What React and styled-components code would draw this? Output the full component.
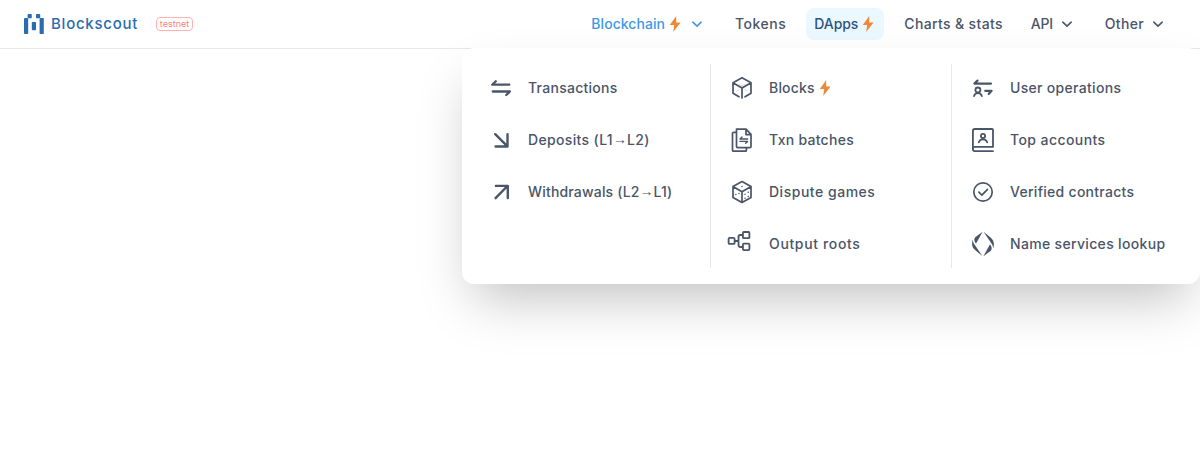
import React from "react";
import styled, { createGlobalStyle } from "styled-components";

const GlobalStyle = createGlobalStyle`
  * { box-sizing: border-box; }
  html, body { margin: 0; background: #fff; }
  body {
    height: 450px;
    overflow: hidden;
    font-family: Inter, "Liberation Sans", sans-serif;
    font-size: 14px;
    font-weight: 500;
    line-height: 20px;
    letter-spacing: 0.35px;
    color: #4a5568;
  }
`;

const Header = styled.header`
  position: relative;
  display: flex;
  align-items: center;
  justify-content: space-between;
  height: 49px;
  padding: 0 24px;
  border-bottom: 1px solid #e8e8e8;
`;

const Brand = styled.div`
  display: flex;
  align-items: center;
`;

const LogoMark = styled.svg`
  display: block;
  width: 20px;
  height: 20px;
`;

const Wordmark = styled.span`
  width: 105px;
  padding-left: 7px;
  margin-right: 7px;
  font-size: 15px;
  font-weight: 500;
  letter-spacing: 0.75px;
  white-space: nowrap;
  color: #2b6cb0;
`;

const NetworkTag = styled.span`
  display: flex;
  align-items: center;
  justify-content: center;
  width: 37px;
  height: 14px;
  border: 1px solid #feb2b2;
  border-radius: 4px;
  font-size: 9px;
  font-weight: 400;
  line-height: 12px;
  letter-spacing: 0;
  color: #fc8181;
`;

const Nav = styled.nav`
  display: flex;
  gap: 12px;
`;

const tones = {
  plain: { color: "#4a5568", background: "transparent" },
  open: { color: "#4299e1", background: "transparent" },
  current: { color: "#2c5282", background: "#ebf8ff" },
};

const NavItem = styled.a`
  display: flex;
  align-items: center;
  height: 32px;
  padding: 0 8px;
  border-radius: 8px;
  white-space: nowrap;
  color: ${(p) => tones[p.$tone || "plain"].color};
  background: ${(p) => tones[p.$tone || "plain"].background};
`;

const Label = styled.span`
  letter-spacing: ${(p) => p.$track ?? 0.35}px;
`;

const Arrow = styled.span`
  font-family: "Liberation Sans", sans-serif;
  font-weight: 400;
  line-height: 1;
  letter-spacing: 0;
  vertical-align: 1px;
`;

const BoltIcon = styled.svg`
  display: block;
  width: 14px;
  height: 16px;
  margin-left: 4px;
  flex: none;
  color: #ed8936;
`;

const ChevronIcon = styled.svg`
  display: block;
  width: 20px;
  height: 20px;
  margin-left: 4px;
  fill: none;
  stroke: currentColor;
  stroke-width: 1.6;
  stroke-linecap: round;
  stroke-linejoin: round;
`;

const Menu = styled.div`
  position: absolute;
  top: 48px;
  right: 0;
  display: flex;
  padding: 16px;
  border-radius: 12px;
  background: #fff;
  box-shadow: 0 25px 50px -12px rgba(0, 0, 0, 0.25);
`;

const Column = styled.div`
  display: flex;
  flex-direction: column;
  gap: 4px;
  & + & {
    border-left: 1px solid #e8e8e8;
    padding-left: 8px;
  }
  &:not(:last-child) {
    padding-right: 8px;
  }
`;

const MenuItem = styled.a`
  display: flex;
  align-items: center;
  width: 224px;
  height: 48px;
  padding: 0 8px;
  white-space: nowrap;
`;

const MenuIcon = styled.svg`
  display: block;
  flex: none;
  width: 30px;
  height: 30px;
  margin-right: 12px;
  fill: none;
  stroke: currentColor;
  stroke-width: ${(p) => p.$weight || 1.7};
  stroke-linecap: round;
  stroke-linejoin: round;
`;

const Bolt = () => (
  <BoltIcon viewBox="0 0 14 16">
    <path d="M7.2 0 .8 9h4.4L4.2 16 11.6 6.6H7.2Z" fill="currentColor" />
  </BoltIcon>
);

const Chevron = () => (
  <ChevronIcon viewBox="0 0 20 20">
    <path d="M5.8 8.2 10 12.2l4.2-4" />
  </ChevronIcon>
);

const icons = {
  transactions: (
    <MenuIcon viewBox="0 0 30 30" $weight={2.3}>
      <path d="M23.3 11.7H6.2L9.8 8.2M6.8 18.5h17.1l-3.6 3.5" />
    </MenuIcon>
  ),
  deposits: (
    <MenuIcon viewBox="0 0 30 30" $weight={2.4}>
      <path d="m9.2 9.2 12 12M21.5 9.2v12.3H9.6" />
    </MenuIcon>
  ),
  withdrawals: (
    <MenuIcon viewBox="0 0 30 30" $weight={2.4}>
      <path d="M9.6 21.2 21.4 9M9.9 8.9h11.9v12.1" />
    </MenuIcon>
  ),
  blocks: (
    <MenuIcon viewBox="0 0 30 30">
      <path d="M6 20.2V9.7l9-5 9 5v10.5l-6 3.6M6 20.2l6 3.6M6.3 9.9 15 15l8.7-5.1M15 15v10" />
      <path d="m15 13 3-1.7M9.5 18.2l2.5-1.5M18 16.7l2.5 1.5M12 11.3l3 1.7" strokeWidth=".5" opacity=".4" />
    </MenuIcon>
  ),
  batches: (
    <MenuIcon viewBox="0 0 30 30">
      <path d="M9.8 4.2H19l5 5.2v12.2q0 1-1 1H10.5q-1 0-1-1V4.2ZM19 4.4v5.2h5M9.2 7.3H6.6q-1.1 0-1.1 1v16.9q0 1 1 1h11.9q1 0 1-1v-2.4" />
      <path d="M20.6 14h-7.6l2-1.9M13 16.4h7.6l-2 1.9" strokeWidth="1.4" />
    </MenuIcon>
  ),
  dispute: (
    <MenuIcon viewBox="0 0 30 30">
      <path d="M15 4.6 24 9.6v10.8L15 25.4 6 20.4V9.6ZM6.3 9.8 15 14.8l8.7-5M15 14.8v10.4" />
      <path d="M15 9.5h.01M8.9 17.5h.01M12 16.5h.01M18 17.2h.01M21.2 15.3h.01M18 21.3h.01M21.2 19.4h.01" strokeWidth="1.5" />
    </MenuIcon>
  ),
  roots: (
    <MenuIcon viewBox="0 0 30 30" $weight={1.8}>
      <rect x="1.6" y="8.9" width="6" height="6" rx="1" />
      <rect x="15.9" y="3" width="6.5" height="6.2" rx="1" />
      <rect x="15.9" y="14.7" width="6.5" height="6.4" rx="1" />
      <path d="M7.8 12h3.6M15.7 6h-2.3q-1.9 0-1.9 1.9v8.2q0 1.9 1.9 1.9h2.3" />
    </MenuIcon>
  ),
  userOps: (
    <MenuIcon viewBox="0 0 30 30" $weight={2.2}>
      <path d="M23 10.6H6.4l3.1-3M17.2 17.8h6.4l-2.9 3.2" />
      <circle cx="9.9" cy="17" r="2.5" strokeWidth="1.8" />
      <path d="M6 23.1c.5-2 2-3 3.9-3s3.4 1 3.9 3" strokeWidth="1.8" />
    </MenuIcon>
  ),
  accounts: (
    <MenuIcon viewBox="0 0 30 30" $weight={1.8}>
      <path d="M4.9 24.2V5.8q0-1.8 1.8-1.8h17.4q.9 0 .9.9v17H6.9q-2 0-2 2t2 2.2H25" />
      <circle cx="15" cy="10.9" r="2.1" />
      <path d="M10.8 17.3c.7-1.9 2.2-2.9 4.2-2.9s3.5 1 4.2 2.9" />
    </MenuIcon>
  ),
  verified: (
    <MenuIcon viewBox="0 0 30 30">
      <circle cx="15" cy="15" r="9.2" />
      <path d="m10.9 15.2 3 2.9 5.6-5.8" />
    </MenuIcon>
  ),
  names: (
    <MenuIcon viewBox="0 0 30 30">
      <g fill="currentColor" stroke="none">
        <path d="M14.6 2.8 8.1 14.6C6.8 13.4 6.2 12 6.4 10.1 6.6 8.9 7.2 8.1 8.2 7.4ZM4.8 10.6c-1.1 3.3-1 6.7 1 9.2 1.3 1.6 5 4.2 8.7 7.4L7.9 17.6C6.1 15.2 4.9 13.6 4.8 10.6Z" />
        <path d="m15.4 27.2 6.5-11.8c1.3 1.2 1.9 2.6 1.7 4.5-.2 1.2-.8 2-1.8 2.7ZM25.2 19.4c1.1-3.3 1-6.7-1-9.2-1.3-1.6-5-4.2-8.7-7.4l6.6 9.6c1.8 2.4 3 4 3.1 7Z" />
      </g>
    </MenuIcon>
  ),
};

const navItems = [
  { label: "Blockchain", tone: "open", bolt: true, chevron: true, track: 0.05 },
  { label: "Tokens", track: 0.5 },
  { label: "DApps", tone: "current", bolt: true, track: -0.05 },
  { label: "Charts & stats" },
  { label: "API", chevron: true, track: -0.3 },
  { label: "Other", chevron: true },
];

const columns = [
  [
    { label: "Transactions", icon: "transactions", track: 0.27 },
    { label: "Deposits (L1→L2)", icon: "deposits" },
    { label: "Withdrawals (L2→L1)", icon: "withdrawals", track: 0.18 },
  ],
  [
    { label: "Blocks", icon: "blocks", bolt: true, track: 0.2 },
    { label: "Txn batches", icon: "batches", track: 0.27 },
    { label: "Dispute games", icon: "dispute", track: 0.52 },
    { label: "Output roots", icon: "roots", track: 0.65 },
  ],
  [
    { label: "User operations", icon: "userOps", track: 0.31 },
    { label: "Top accounts", icon: "accounts", track: 0.42 },
    { label: "Verified contracts", icon: "verified", track: 0.28 },
    { label: "Name services lookup", icon: "names", track: 0.33 },
  ],
];

const ItemLabel = ({ text, track }) => {
  const [from, to] = text.split("→");
  return (
    <Label $track={track}>
      {from}
      {to && <Arrow>→</Arrow>}
      {to}
    </Label>
  );
};

export default function App() {
  return (
    <>
      <GlobalStyle />
      <Header>
        <Brand>
          <LogoMark viewBox="0 0 20 20" fill="#2b6cb0">
            <rect x="0" y="4" width="4.2" height="16" rx=".8" />
            <rect x="3.6" y="0" width="4.2" height="4.3" rx=".8" />
            <rect x="12" y="0" width="4.2" height="4.3" rx=".8" />
            <rect x="15.6" y="4" width="4.2" height="16" rx=".8" />
            <rect x="7.8" y="8" width="4.2" height="8.2" rx=".8" />
          </LogoMark>
          <Wordmark>Blockscout</Wordmark>
          <NetworkTag>testnet</NetworkTag>
        </Brand>
        <Nav>
          {navItems.map((item) => (
            <NavItem key={item.label} $tone={item.tone}>
              <ItemLabel text={item.label} track={item.track} />
              {item.bolt && <Bolt />}
              {item.chevron && <Chevron />}
            </NavItem>
          ))}
        </Nav>
        <Menu>
          {columns.map((items, i) => (
            <Column key={i}>
              {items.map((item) => (
                <MenuItem key={item.label}>
                  {icons[item.icon]}
                  <ItemLabel text={item.label} track={item.track} />
                  {item.bolt && <Bolt />}
                </MenuItem>
              ))}
            </Column>
          ))}
        </Menu>
      </Header>
    </>
  );
}
